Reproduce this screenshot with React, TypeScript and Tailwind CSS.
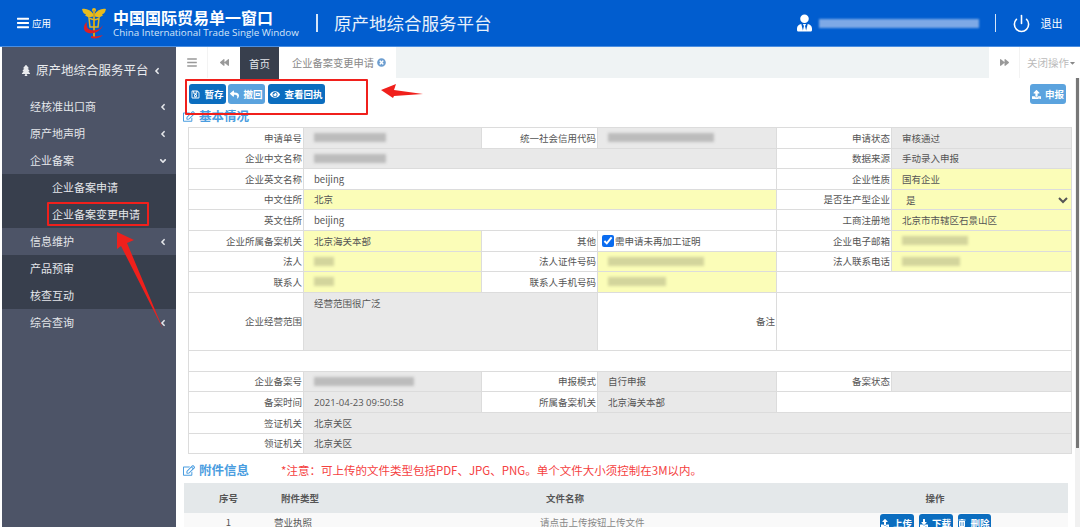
import { ReactNode } from 'react';
import {
    FaAngleDown,
    FaAngleLeft,
    FaBackward,
    FaBars,
    FaCaretDown,
    FaDownload,
    FaEye,
    FaForward,
    FaRegEdit,
    FaRegSave,
    FaReply,
    FaTimesCircle,
    FaTrashAlt,
    FaTree,
    FaUpload,
    FaUserTie,
} from 'react-icons/fa';
import { FiPower } from 'react-icons/fi';

const font = { fontFamily: '"Noto Sans CJK SC", "Liberation Sans", sans-serif' };

function Blur({ w, light }: { w: number; light?: boolean }) {
    return (
        <div
            className={`h-[9px] blur-[1.5px] ${light ? 'bg-[#d3d59c]' : 'bg-[#bcbcbc]'}`}
            style={{ width: w }}
        />
    );
}

function Label({ children }: { children?: ReactNode }) {
    return (
        <td className="border border-[#dcdcdc] bg-white pr-[1px] text-right align-middle text-[9.5px] text-[#555]">
            {children}
        </td>
    );
}

type Tone = 'gray' | 'yellow' | 'white';

function Value({ tone, span, children, top }: { tone: Tone; span?: number; children?: ReactNode; top?: boolean }) {
    const bg = tone === 'gray' ? 'bg-[#e9e9e9]' : tone === 'yellow' ? 'bg-[#fbfdb8]' : 'bg-white';
    return (
        <td
            colSpan={span}
            className={`border border-[#dcdcdc] pl-[10px] text-[9.5px] text-[#555] ${bg} ${top ? 'pt-[3px] align-top' : 'align-middle'}`}
        >
            {children}
        </td>
    );
}

function Btn({ icon, text, light, className }: { icon: ReactNode; text: string; light?: boolean; className: string }) {
    return (
        <div
            className={`flex items-center justify-center gap-[4px] rounded-[3px] text-[9.5px] font-bold text-white ${light ? 'bg-[#5ba3de]' : 'bg-[#0b6dbf]'} ${className}`}
        >
            {icon}
            <span>{text}</span>
        </div>
    );
}

function SideItem({ text, open, arrow, dark, sub }: { text: string; open?: boolean; arrow?: boolean; dark?: boolean; sub?: boolean }) {
    return (
        <div
            className={`flex h-[27px] items-center justify-between pr-[8px] text-[#e4e6ea] ${sub ? 'pl-[50px] text-[11px]' : 'pl-[28px] text-[11px]'} ${dark ? 'bg-[#383f4d]' : ''}`}
        >
            <span>{text}</span>
            {arrow && (open ? <FaAngleDown className="h-[10px] w-[10px]" /> : <FaAngleLeft className="h-[10px] w-[10px]" />)}
        </div>
    );
}

function Logo() {
    return (
        <svg width="24" height="33" viewBox="0 0 24 33" className="shrink-0">
            <path d="M12 8C9 3 4 1 0 2c1 4 2 5 4 5-1 1-1 2 0 2 3 2 6 1 8 0 2 1 5 2 8 0 1 0 1-1 0-2 2 0 3-1 4-5-4-1-9 1-12 6z" fill="#e8bb1e" />
            <circle cx="12" cy="3" r="2" fill="#e8bb1e" />
            <rect x="11" y="3" width="2" height="27" fill="#c9a421" />
            <path d="M7 11c4 2 8 2 10 0l-1 9H8z" fill="none" stroke="#dcb52a" strokeWidth="1.5" />
            <path d="M21 18c-3 8-12 10-17 7-3-2-3-7 1-10-1 4 0 7 4 8 4 1 9 0 12-5z" fill="#dc1f26" />
            <path d="M9 31c4 1 9 0 12-3-3 1-8 2-12 1z" fill="#dc1f26" />
        </svg>
    );
}

export default function App() {
    return (
        <div className="relative flex h-[527px] w-[1080px] flex-col overflow-hidden bg-white" style={font}>
            {/* Header */}
            <header className="flex h-[47px] shrink-0 items-center border-b border-[#4b8ee0] bg-[#015dcf] pl-[17px] text-white">
                <FaBars className="h-[14px] w-[12px]" />
                <span className="ml-[3px] w-[50px] text-[9.5px]">应用</span>
                <Logo />
                <div className="ml-[7px] flex w-[203px] flex-col">
                    <span className="text-[16px] leading-[20px] font-bold">中国国际贸易单一窗口</span>
                    <span className="text-[9.8px] leading-[12px] whitespace-nowrap text-[#d5e5f8]" style={{ fontFamily: '"Open Sans", sans-serif' }}>
                        China International Trade Single Window
                    </span>
                </div>
                <div className="h-[18px] w-[2px] bg-[#d5e5f8]" />
                <span className="ml-[16px] text-[17.5px] text-[#e8f1fb]">原产地综合服务平台</span>
                <FaUserTie className="ml-[305px] h-[18px] w-[15px]" />
                <div className="ml-[7px] h-[9px] w-[160px] bg-[#7ea9e6] blur-[1px]" />
                <div className="ml-[16px] h-[18px] w-[1px] bg-[#d5e5f8]" />
                <FiPower className="ml-[16px] h-[19px] w-[19px]" />
                <span className="ml-[10px] text-[11px]">退出</span>
            </header>

            <div className="flex min-h-0 flex-1 pl-[2px]">
                {/* Sidebar */}
                <aside className="w-[174px] shrink-0 bg-[#4d5467]">
                    <div className="flex h-[46px] items-center pt-[1px] pl-[19px] text-[#e9ebee]">
                        <FaTree className="h-[11px] w-[10px]" />
                        <span className="ml-[5px] text-[12.5px]">原产地综合服务平台</span>
                        <FaAngleLeft className="ml-[3px] h-[10px] w-[10px]" />
                    </div>
                    <SideItem text="经核准出口商" arrow />
                    <SideItem text="原产地声明" arrow />
                    <SideItem text="企业备案" arrow open />
                    <SideItem text="企业备案申请" dark sub />
                    <SideItem text="企业备案变更申请" dark sub />
                    <SideItem text="信息维护" arrow />
                    <SideItem text="产品预审" dark />
                    <SideItem text="核查互动" dark />
                    <SideItem text="综合查询" arrow />
                </aside>

                {/* Main */}
                <main className="relative flex min-w-0 flex-1 flex-col">
                    {/* Tab bar */}
                    <div className="flex h-[31px] shrink-0 items-center bg-[#eff3f4] text-[#999]">
                        <div className="flex h-full w-[32px] items-center justify-center border-r border-[#f3f3f3] bg-white">
                            <FaBars className="h-[11px] w-[10px]" />
                        </div>
                        <div className="flex h-full w-[32px] items-center justify-center bg-white">
                            <FaBackward className="h-[9px] w-[9px]" />
                        </div>
                        <div className="flex h-[34px] w-[39px] items-center justify-center self-start bg-[#383f4d] text-[10.5px] text-[#e4e6ea]">首页</div>
                        <div className="flex h-full w-[117px] items-center gap-[3px] bg-white pl-[13px] text-[10.25px] text-[#888]">
                            企业备案变更申请
                            <FaTimesCircle className="h-[9px] w-[9px] text-[#6d9ed0]" />
                        </div>
                        <div className="flex-1" />
                        <div className="flex h-full w-[31px] items-center justify-center border-r border-[#f3f3f3] bg-white">
                            <FaForward className="h-[9px] w-[9px]" />
                        </div>
                        <div className="flex h-full w-[60px] items-center bg-white pl-[7px] text-[10.5px] text-[#bbb]">
                            关闭操作
                            <FaCaretDown className="h-[8px] w-[7px] text-[#888]" />
                        </div>
                    </div>

                    {/* Toolbar */}
                    <div className="relative z-10 mt-[6px] flex h-[20px] shrink-0 items-stretch justify-between pr-[14px] pl-[13px]">
                        <div className="flex gap-[2px]">
                            <Btn className="w-[37px]" icon={<FaRegSave className="h-[9px] w-[9px]" />} text="暂存" />
                            <Btn className="w-[37px]" light icon={<FaReply className="h-[9px] w-[9px]" />} text="撤回" />
                            <Btn className="ml-[1px] w-[57px]" icon={<FaEye className="h-[9px] w-[10px]" />} text="查看回执" />
                        </div>
                        <Btn className="w-[36px]" light icon={<FaUpload className="h-[9px] w-[9px]" />} text="申报" />
                    </div>

                    <div className="mt-[1px] flex h-[22px] shrink-0 items-center pl-[7px] text-[#4a9de0]">
                        <FaRegEdit className="h-[11px] w-[12px]" />
                        <span className="ml-[4px] text-[12.5px] font-bold">基本情况</span>
                    </div>

                    {/* Form table */}
                    <table className="ml-[12px] w-[883px] shrink-0 table-fixed border-collapse border border-[#dcdcdc]">
                        <colgroup>
                            <col className="w-[115px]" />
                            <col className="w-[178px]" />
                            <col className="w-[116px]" />
                            <col className="w-[179px]" />
                            <col className="w-[115px]" />
                            <col className="w-[180px]" />
                        </colgroup>
                        <tbody>
                            <tr className="h-[20.6px]">
                                <Label>申请单号</Label>
                                <Value tone="gray"><Blur w={72} /></Value>
                                <Label>统一社会信用代码</Label>
                                <Value tone="gray"><Blur w={106} /></Value>
                                <Label>申请状态</Label>
                                <Value tone="gray">审核通过</Value>
                            </tr>
                            <tr className="h-[20.6px]">
                                <Label>企业中文名称</Label>
                                <Value tone="gray" span={3}><Blur w={72} /></Value>
                                <Label>数据来源</Label>
                                <Value tone="gray">手动录入申报</Value>
                            </tr>
                            <tr className="h-[20.6px]">
                                <Label>企业英文名称</Label>
                                <Value tone="white" span={3}>beijing</Value>
                                <Label>企业性质</Label>
                                <Value tone="yellow">国有企业</Value>
                            </tr>
                            <tr className="h-[20.6px]">
                                <Label>中文住所</Label>
                                <Value tone="yellow" span={3}>北京</Value>
                                <Label>是否生产型企业</Label>
                                <td className="border border-[#dcdcdc] bg-[#fbfdb8] p-0 align-middle">
                                    <select defaultValue="是" className="block h-[16px] w-full bg-[#fbfdb8] pl-[10px] text-[9.5px] leading-[16px] text-[#555] outline-none">
                                        <option>是</option>
                                    </select>
                                </td>
                            </tr>
                            <tr className="h-[20.6px]">
                                <Label>英文住所</Label>
                                <Value tone="white" span={3}>beijing</Value>
                                <Label>工商注册地</Label>
                                <Value tone="yellow">北京市市辖区石景山区</Value>
                            </tr>
                            <tr className="h-[20.6px]">
                                <Label>企业所属备案机关</Label>
                                <Value tone="yellow">北京海关本部</Value>
                                <Label>其他</Label>
                                <td className="border border-[#dcdcdc] bg-white pl-[4px] align-middle text-[9.5px] text-[#555]">
                                    <label className="flex items-center gap-[1px]">
                                        <input type="checkbox" checked readOnly className="m-0 h-[12px] w-[12px] accent-[#0a6cf0]" />
                                        需申请未再加工证明
                                    </label>
                                </td>
                                <Label>企业电子邮箱</Label>
                                <Value tone="yellow"><Blur w={66} light /></Value>
                            </tr>
                            <tr className="h-[20.6px]">
                                <Label>法人</Label>
                                <Value tone="yellow"><Blur w={20} light /></Value>
                                <Label>法人证件号码</Label>
                                <Value tone="yellow"><Blur w={96} light /></Value>
                                <Label>法人联系电话</Label>
                                <Value tone="yellow"><Blur w={58} light /></Value>
                            </tr>
                            <tr className="h-[20.6px]">
                                <Label>联系人</Label>
                                <Value tone="yellow"><Blur w={20} light /></Value>
                                <Label>联系人手机号码</Label>
                                <Value tone="yellow"><Blur w={58} light /></Value>
                                <Value tone="white" span={2} />
                            </tr>
                            <tr className="h-[58px]">
                                <Label>企业经营范围</Label>
                                <Value tone="gray" span={2} top>经营范围很广泛</Value>
                                <Label>备注</Label>
                                <Value tone="white" span={2} />
                            </tr>
                            <tr className="h-[21px]">
                                <Value tone="white" span={6} />
                            </tr>
                            <tr className="h-[20.6px]">
                                <Label>企业备案号</Label>
                                <Value tone="gray"><Blur w={100} /></Value>
                                <Label>申报模式</Label>
                                <Value tone="gray">自行申报</Value>
                                <Label>备案状态</Label>
                                <Value tone="gray" />
                            </tr>
                            <tr className="h-[20.6px]">
                                <Label>备案时间</Label>
                                <Value tone="gray"><span className="text-[9.5px]" style={{ fontFamily: '"Open Sans", sans-serif' }}>2021-04-23 09:50:58</span></Value>
                                <Label>所属备案机关</Label>
                                <Value tone="gray">北京海关本部</Value>
                                <Value tone="white" span={2} />
                            </tr>
                            <tr className="h-[20.6px]">
                                <Label>签证机关</Label>
                                <Value tone="gray" span={5}>北京关区</Value>
                            </tr>
                            <tr className="h-[20.6px]">
                                <Label>领证机关</Label>
                                <Value tone="gray" span={5}>北京关区</Value>
                            </tr>
                        </tbody>
                    </table>

                    {/* Attachments */}
                    <div className="mt-[6px] flex h-[21px] shrink-0 items-center pl-[7px]">
                        <FaRegEdit className="h-[11px] w-[12px] text-[#4a9de0]" />
                        <span className="ml-[4px] text-[12.5px] font-bold text-[#4a9de0]">附件信息</span>
                        <span className="ml-[32px] text-[11.5px] text-[#f5413f]">*注意：可上传的文件类型包括PDF、JPG、PNG。单个文件大小须控制在3M以内。</span>
                    </div>
                    <table className="mt-[2px] ml-[8px] w-[884px] shrink-0 table-fixed border-collapse text-[9.5px] text-[#555]">
                        <colgroup>
                            <col className="w-[89px]" />
                            <col className="w-[265px]" />
                            <col className="w-[264px]" />
                            <col className="w-[266px]" />
                        </colgroup>
                        <thead>
                            <tr className="h-[30px] bg-[#e4e8ea] font-bold">
                                <th className="text-center">序号</th>
                                <th className="pl-[8px] text-left">附件类型</th>
                                <th className="pl-[8px] text-left">文件名称</th>
                                <th className="text-center">操作</th>
                            </tr>
                        </thead>
                        <tbody>
                            <tr className="h-[26px] bg-[#f9f9f9]">
                                <td className="pt-[2px] text-center align-top">1</td>
                                <td className="pt-[2px] pl-[1px] align-top">营业执照</td>
                                <td className="pt-[2px] pl-[2px] align-top text-[#888]">请点击上传按钮上传文件</td>
                                <td className="align-top">
                                    <div className="flex h-[18px] justify-center gap-[5px] pt-[1px]">
                                        <Btn className="w-[34px]" icon={<FaUpload className="h-[8px] w-[8px]" />} text="上传" />
                                        <Btn className="w-[34px]" icon={<FaDownload className="h-[8px] w-[8px]" />} text="下载" />
                                        <Btn className="w-[33px]" icon={<FaTrashAlt className="h-[8px] w-[8px]" />} text="删除" />
                                    </div>
                                </td>
                            </tr>
                        </tbody>
                    </table>

                    {/* Scrollbar */}
                    <div className="absolute top-[31px] right-0 bottom-0 w-[5px] bg-[#f1f1f1]">
                        <div className="mx-auto h-[370px] w-[3px] bg-[#777]" />
                    </div>
                </main>
            </div>

            {/* Red annotations drawn over the screenshot */}
            <div className="absolute top-[79px] left-[185px] h-[36px] w-[183px] rounded-[1px] border-2 border-[#f0201c]" />
            <div className="absolute top-[202px] left-[47px] h-[24px] w-[102px] rounded-[1px] border-2 border-[#f0201c]" />
            <svg className="absolute top-0 left-0" width="1080" height="527" viewBox="0 0 1080 527">
                <polygon points="381,90 396,84 394,90 423,94 394,96 393,98" fill="#f0201c" />
                <polygon points="117,232 134,240 127,243 163,329 121,246 117,249" fill="#f0201c" />
            </svg>
        </div>
    );
}
